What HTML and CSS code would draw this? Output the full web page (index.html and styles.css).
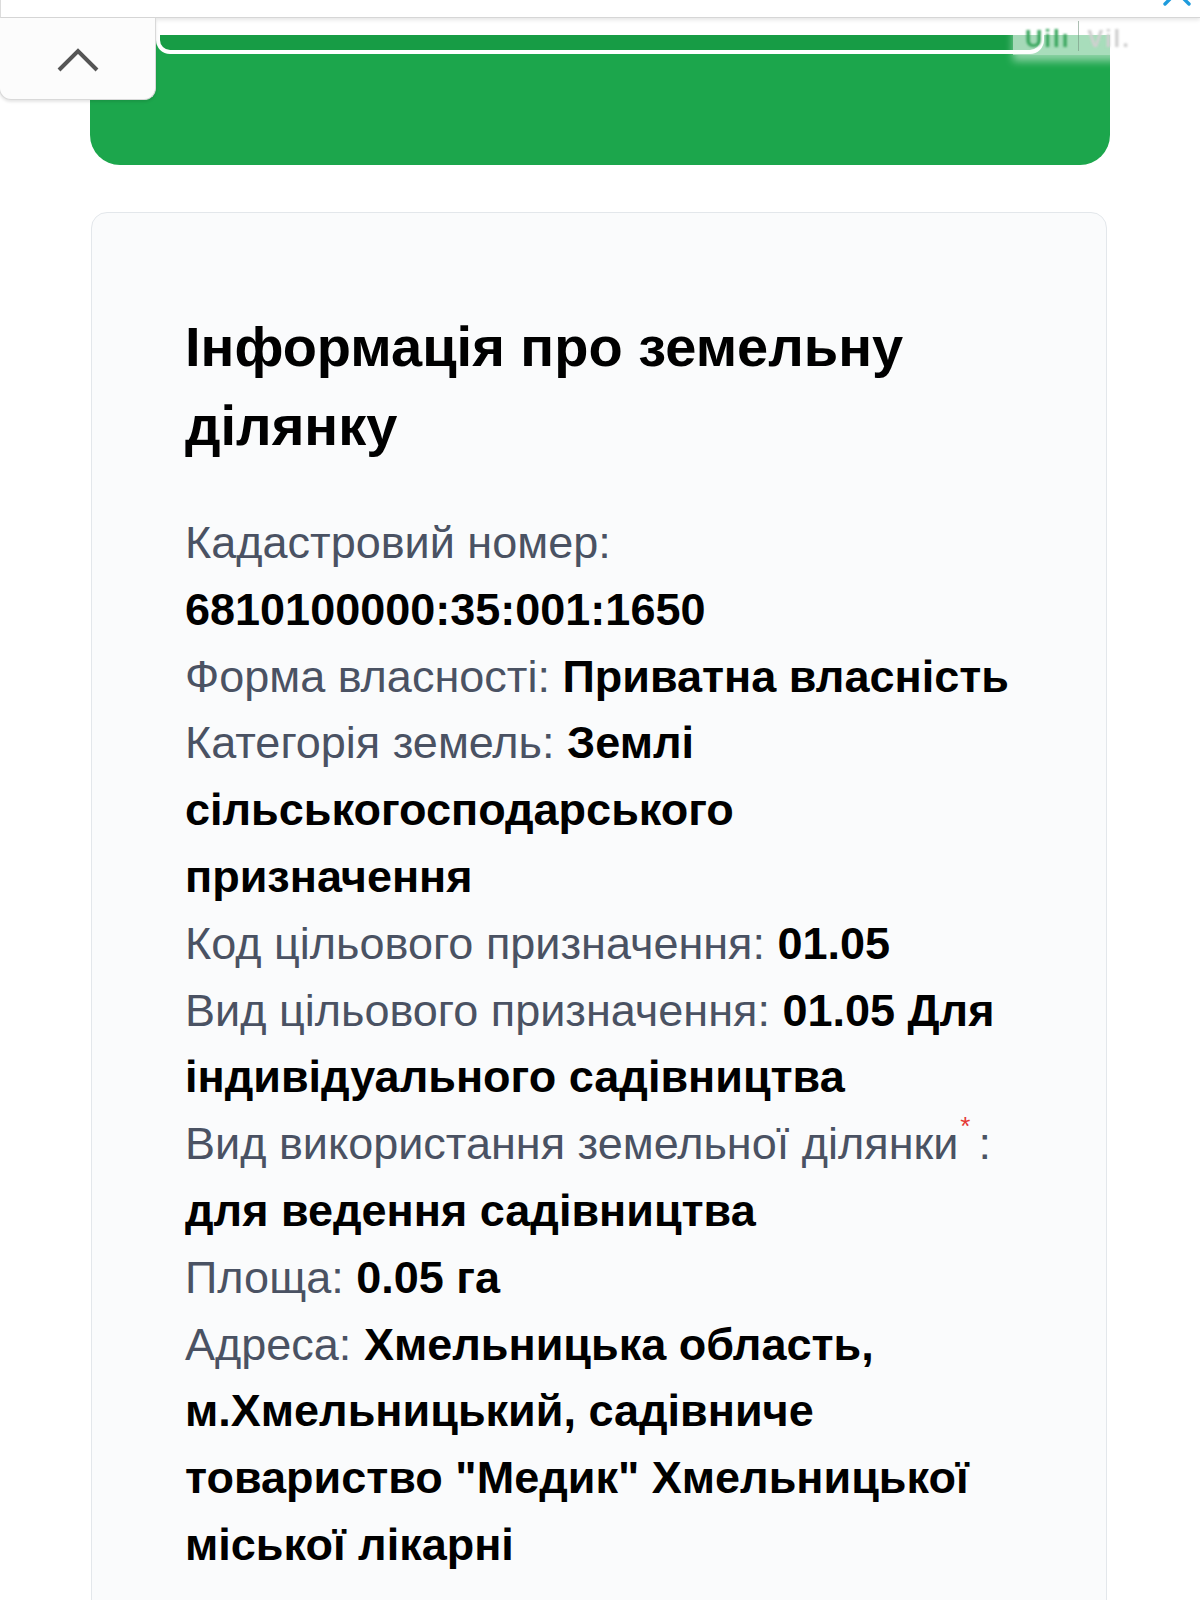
FILE: index.html
```html
<!DOCTYPE html>
<html lang="uk">
<head>
<meta charset="utf-8">
<title>Інформація про земельну ділянку</title>
<link rel="stylesheet" href="styles.css">
</head>
<body>
<header class="topbar">
  <svg class="close-icon" width="34" height="34" viewBox="0 0 34 34" aria-hidden="true">
    <path d="M5 5 L29 29 M29 5 L5 29" stroke="#1e9bdc" stroke-width="3.4" stroke-linecap="round" fill="none"/>
  </svg>
</header>

<button class="to-top" aria-label="Вгору">
  <svg width="44" height="26" viewBox="0 0 44 26" aria-hidden="true">
    <path d="M3 22 L22 3 L41 22" stroke="#555" stroke-width="4" fill="none" stroke-linecap="butt" stroke-linejoin="miter"/>
  </svg>
</button>

<main class="page">
  <section class="promo">
    <div class="promo-strip"></div>
    <div class="promo-ghost">
      <span class="ghost-text">Uilı</span>
      <span class="ghost-sep"></span>
      <span class="ghost-text ghost-grey">Vil.</span>
    </div>
  </section>

  <article class="card">
    <h1 class="card-title">Інформація про земельну ділянку</h1>
    <div class="rows">
      <p class="row"><span class="label">Кадастровий номер:</span> <b class="value">6810100000:35:001:1650</b></p>
      <p class="row"><span class="label">Форма власності:</span> <b class="value">Приватна власність</b></p>
      <p class="row"><span class="label">Категорія земель:</span> <b class="value">Землі сільськогосподарського призначення</b></p>
      <p class="row"><span class="label">Код цільового призначення:</span> <b class="value">01.05</b></p>
      <p class="row"><span class="label">Вид цільового призначення:</span> <b class="value">01.05 Для індивідуального садівництва</b></p>
      <p class="row"><span class="label">Вид використання земельної ділянки<sup class="req">*</sup>:</span> <b class="value">для ведення садівництва</b></p>
      <p class="row"><span class="label">Площа:</span> <b class="value">0.05 га</b></p>
      <p class="row"><span class="label">Адреса:</span> <b class="value">Хмельницька область, м.Хмельницький, садівниче товариство "Медик" Хмельницької міської лікарні</b></p>
    </div>
  </article>
</main>
</body>
</html>
```

FILE: styles.css
```css
* {
  box-sizing: border-box;
}

html, body {
  margin: 0;
  padding: 0;
  background: #ffffff;
}

body {
  font-family: "Liberation Sans", Arial, Helvetica, sans-serif;
  color: #000;
  position: relative;
  min-height: 1600px;
  overflow: hidden;
}

/* ---------- top bar ---------- */
.topbar {
  position: relative;
  z-index: 5;
  height: 18px;
  background: #ffffff;
  border-bottom: 1px solid #d6d6d6;
  border-left: 1px solid #dcdcdc;
  box-shadow: 0 2px 4px rgba(0, 0, 0, 0.10);
  display: flex;
  justify-content: flex-end;
  align-items: flex-end;
  padding-right: 6px;
}

.close-icon {
  display: block;
  margin-bottom: -6px;
  transform: translateY(-14px);
}

/* ---------- back-to-top tab (floats over content) ---------- */
.to-top {
  position: absolute;
  z-index: 6;
  left: -1px;
  top: 18px;
  width: 157px;
  height: 82px;
  padding: 4px 0 0 0;
  background: #fcfcfc;
  border: 1px solid #d9d9d9;
  border-top: none;
  border-radius: 0 0 12px 12px;
  box-shadow: 0 2px 3px rgba(0, 0, 0, 0.10);
  display: flex;
  align-items: center;
  justify-content: center;
}

.to-top svg {
  display: block;
  margin-left: 1px;
}

/* ---------- page ---------- */
.page {
  padding: 17px 90px 0 90px;
  display: flex;
  flex-direction: column;
  gap: 47px;
}

/* ---------- green promo block ---------- */
.promo {
  position: relative;
  height: 130px;
  background: #1ca64c;
  border-radius: 0 0 30px 30px;
  padding: 0 66px;
}

.promo-strip {
  height: 19px;
  background: #179c45;
  border: 4px solid #ffffff;
  border-top: none;
  border-radius: 0 0 14px 14px;
}

.promo-ghost {
  position: absolute;
  top: -17px;
  left: 923px;
  width: 142px;
  height: 37px;
  background: rgba(255, 255, 255, 0.62);
  box-shadow: 0 6px 8px rgba(255, 255, 255, 0.5);
  display: flex;
  align-items: flex-end;
  padding: 0 0 4px 12px;
  gap: 8px;
}

.ghost-text {
  font-size: 24px;
  font-weight: bold;
  color: #3aa65e;
  letter-spacing: 2px;
  filter: blur(1.2px);
  line-height: 1;
}

.ghost-grey {
  color: #d0d0d0;
}

.ghost-sep {
  width: 1px;
  height: 30px;
  background: rgba(120, 150, 130, 0.6);
}

/* ---------- info card ---------- */
.card {
  margin: 0 3px 0 1px;
  background: #fafbfc;
  border: 1px solid #e3e7eb;
  border-radius: 16px;
  padding: 95px 88px 120px 93px;
  min-height: 1500px;
}

.card-title {
  margin: 0 0 45px 0;
  font-size: 56px;
  line-height: 78.5px;
  font-weight: bold;
  color: #000;
}

.rows {
  display: flex;
  flex-direction: column;
}

.row {
  margin: 0;
  font-size: 45px;
  line-height: 66.8px;
}

.label {
  color: #4a5263;
}

.value {
  font-weight: bold;
  color: #000;
}

.req {
  color: #e53935;
  font-size: 26px;
  line-height: 1;
  vertical-align: top;
  position: relative;
  top: 2px;
  margin: 0 8px 0 2px;
}
```
